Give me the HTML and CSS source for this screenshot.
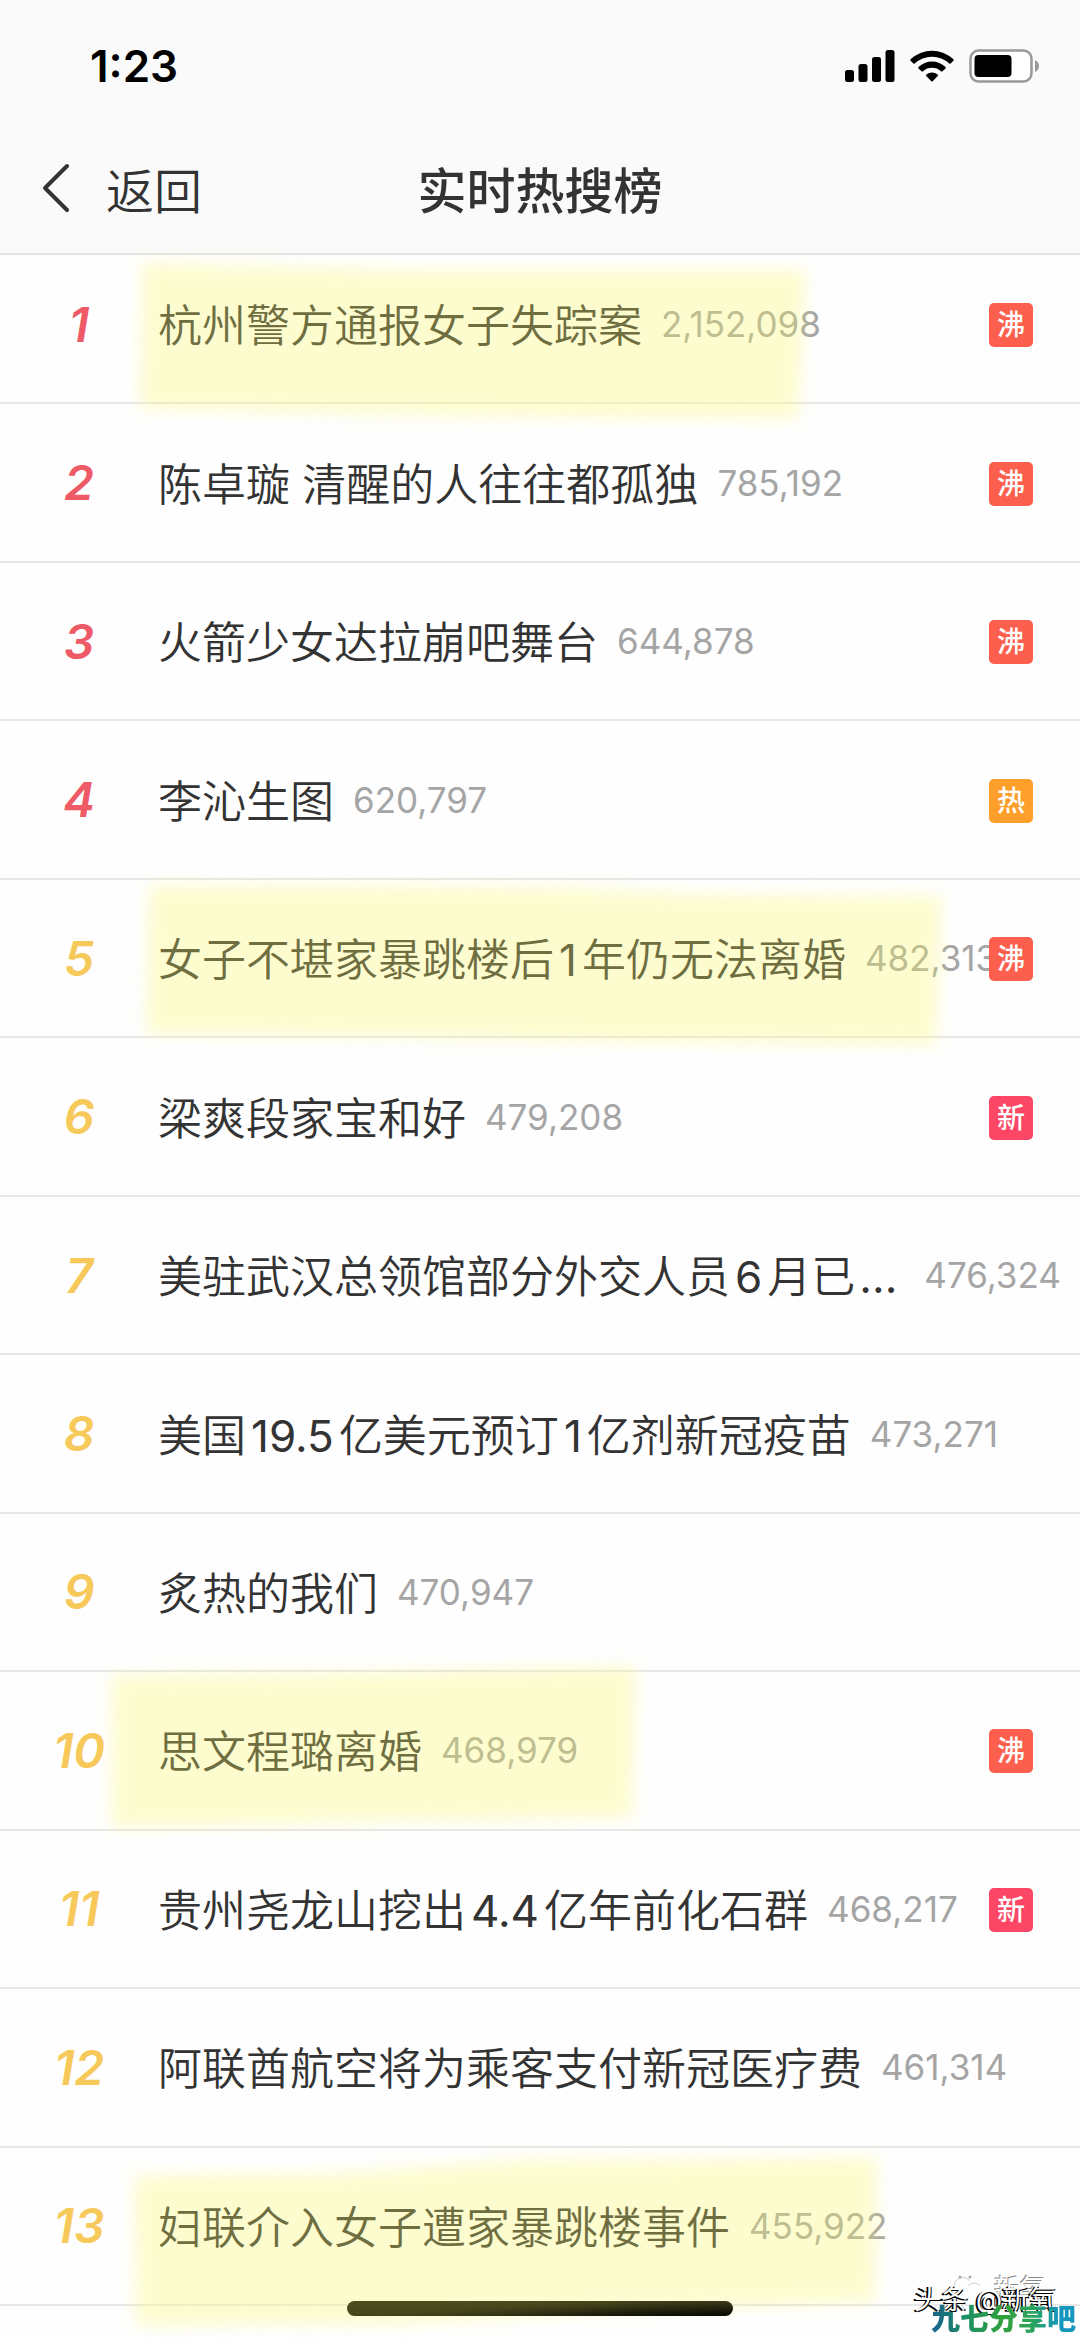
FILE: index.html
```html
<!DOCTYPE html>
<html lang="zh-CN">
<head>
<meta charset="utf-8">
<meta name="viewport" content="width=device-width, initial-scale=1">
<title>实时热搜榜</title>
<link rel="stylesheet" href="styles.css">
</head>
<body>
<div class="screen">
  <header class="top">
    <div class="status">
      <span class="time">1:23</span>
      <div class="indicators">
        <svg width="50" height="32" viewBox="0 0 50 32" aria-hidden="true"><rect x="0" y="20" width="9" height="12" rx="2.500"/><rect x="13.500" y="14" width="9" height="18" rx="2.500"/><rect x="27" y="7" width="9" height="25" rx="2.500"/><rect x="40.500" y="0" width="9" height="32" rx="2.500"/></svg>
        <svg width="44" height="32" viewBox="0 0 44 32" aria-hidden="true"><path d="M0.600 9.300A31 31 0 0 1 43.400 9.300Q44 10 43.400 10.700L40.600 13.400Q40 14 39.300 13.400A25.500 25.500 0 0 0 4.700 13.400Q4 14 3.400 13.400L0.600 10.700Q0 10 0.600 9.300Z"/><path d="M8.500 17A19.500 19.500 0 0 1 35.500 17Q36.200 17.700 35.500 18.400L32.500 21.300Q31.800 22 31 21.300A13.500 13.500 0 0 0 13 21.300Q12.200 22 11.500 21.300L8.500 18.400Q7.800 17.700 8.500 17Z"/><path d="M16.400 24.600A8.500 8.500 0 0 1 27.600 24.600Q28.400 25.300 27.700 26L22.700 31.200Q22 31.900 21.300 31.200L16.300 26Q15.600 25.300 16.400 24.600Z"/></svg>
        <svg width="71" height="34" viewBox="0 0 71 34" aria-hidden="true"><rect x="1.500" y="1.500" width="61" height="31" rx="8" fill="#fff" stroke="#999" stroke-width="2.500"/><rect x="5.500" y="6" width="37" height="22" rx="4"/><path d="M66 11Q70 13 70 17T66 23Z" fill="#999"/></svg>
      </div>
    </div>
    <nav class="nav">
      <button class="back" type="button">
        <svg width="28" height="50" viewBox="0 0 28 50" aria-hidden="true"><path d="M25 3L3 25L25 47" fill="none" stroke="#333" stroke-width="4" stroke-linecap="round" stroke-linejoin="round"/></svg>
        <span>返回</span>
      </button>
      <h1 class="title">实时热搜榜</h1>
    </nav>
  </header>

  <ol class="list">
    <li class="row">
      <span class="rank hot">1</span><a class="topic" href="#">杭州警方通报女子失踪案</a><span class="count">2,152,098</span><span class="tag boil">沸</span>
      <svg class="marker" width="900" height="180" aria-hidden="true"><polygon points="142,16 220,19 420,24 806,24 798,173 500,171 140,163"/></svg>
    </li>
    <li class="row"><span class="rank hot">2</span><a class="topic" href="#">陈卓璇 清醒的人往往都孤独</a><span class="count">785,192</span><span class="tag boil">沸</span></li>
    <li class="row"><span class="rank hot">3</span><a class="topic" href="#">火箭少女达拉崩吧舞台</a><span class="count">644,878</span><span class="tag boil">沸</span></li>
    <li class="row"><span class="rank hot">4</span><a class="topic" href="#">李沁生图</a><span class="count">620,797</span><span class="tag warm">热</span></li>
    <li class="row">
      <span class="rank">5</span><a class="topic" href="#">女子不堪家暴跳楼后<span class="num">1</span>年仍无法离婚</a><span class="count">482,313</span><span class="tag boil">沸</span>
      <svg class="marker" width="1000" height="180" aria-hidden="true"><polygon points="149,5 560,7 700,14 942,16 936,165 640,162 400,157 146,154"/></svg>
    </li>
    <li class="row"><span class="rank">6</span><a class="topic" href="#">梁爽段家宝和好</a><span class="count">479,208</span><span class="tag new">新</span></li>
    <li class="row"><span class="rank">7</span><a class="topic" href="#">美驻武汉总领馆部分外交人员<span class="num">6</span>月已<span class="more">...</span></a><span class="count">476,324</span></li>
    <li class="row"><span class="rank">8</span><a class="topic" href="#">美国<span class="num">19.5</span>亿美元预订<span class="num">1</span>亿剂新冠疫苗</a><span class="count">473,271</span></li>
    <li class="row"><span class="rank">9</span><a class="topic" href="#">炙热的我们</a><span class="count">470,947</span></li>
    <li class="row">
      <span class="rank">10</span><a class="topic" href="#">思文程璐离婚</a><span class="count">468,979</span><span class="tag boil">沸</span>
      <svg class="marker" width="700" height="180" aria-hidden="true"><polygon points="111,3 400,0 636,-6 632,146 400,149 112,156"/></svg>
    </li>
    <li class="row"><span class="rank">11</span><a class="topic" href="#">贵州尧龙山挖出<span class="num">4.4</span>亿年前化石群</a><span class="count">468,217</span><span class="tag new">新</span></li>
    <li class="row"><span class="rank">12</span><a class="topic" href="#">阿联酋航空将为乘客支付新冠医疗费</a><span class="count">461,314</span></li>
    <li class="row">
      <span class="rank">13</span><a class="topic" href="#">妇联介入女子遭家暴跳楼事件</a><span class="count">455,922</span>
      <svg class="marker" width="900" height="190" aria-hidden="true"><polygon points="134,27 340,25 520,12 877,10 875,154 640,162 400,176 136,178"/></svg>
    </li>
  </ol>

  <div class="home"></div>

  <div class="marks">
    <span class="mark-wechat">
      <svg width="30" height="24" viewBox="0 0 30 24" aria-hidden="true"><path d="M2 14A9 9 0 0 1 18 8M16 13A7 6 0 0 1 28 13" fill="none" stroke="#ccc"/><circle cx="8" cy="4" r="1.500"/><circle cx="18" cy="4" r="1.500"/></svg>
      新氧
    </span>
    <span class="mark-author">头条 @新氧</span>
    <span class="mark-site">九七分享吧</span>
  </div>
</div>
</body>
</html>
```
FILE: styles.css
```css
* {
  box-sizing: border-box;
}

body {
  margin: 0;
  background: #fefefe;
  color: #333;
  font-family: Inter, "Noto Sans CJK SC", sans-serif;
}

.screen {
  position: relative;
  display: flex;
  flex-direction: column;
  min-height: 100vh;
  overflow: hidden;
}

/* header */
.top {
  background: #fafafa;
  border-bottom: 2px solid #e4e4e4;
}

.status {
  display: flex;
  align-items: center;
  justify-content: space-between;
  height: 132px;
  padding: 0 40px 0 90px;
}

.time {
  color: #000;
  font-size: 44px;
  font-weight: 600;
}

.indicators {
  display: flex;
  align-items: center;
  gap: 15px;
}

.nav {
  display: grid;
  grid-template-columns: 1fr auto 1fr;
  align-items: center;
  height: 121px;
  padding: 0 42px 10px;
}

.back {
  display: flex;
  align-items: center;
  gap: 36px;
  padding: 0;
  border: 0;
  background: none;
  color: inherit;
  font: inherit;
  font-size: 48px;
  font-weight: 350;
}

.title {
  margin: 0;
  font-size: 49px;
  font-weight: 500;
}

/* ranking; the first row is scrolled slightly under the header */
.list {
  display: flex;
  flex: 1;
  flex-direction: column;
  margin: -9px 0 33px;
  padding: 0;
  list-style: none;
}

.row {
  position: relative;
  display: flex;
  flex: 1;
  align-items: center;
  min-height: 120px;
  padding-right: 20px;
  border-bottom: 2px solid #e8e8e8;
  white-space: nowrap;
}

.rank {
  flex: none;
  width: 158px;
  color: #f7c95a;
  font-size: 48px;
  font-style: italic;
  font-weight: 600;
  text-align: center;
}

.rank.hot {
  color: #ee5a66;
}

.topic {
  margin-right: 19px;
  padding-bottom: 2px;
  color: inherit;
  font-size: 44px;
  font-weight: 350;
  text-decoration: none;
}

.num {
  margin: 0 5px;
  font-weight: 400;
}

.more {
  margin: 0 8px 0 4px;
  font-weight: 400;
}

.count {
  color: #a5a5a5;
  font-size: 35px;
  font-weight: 400;
}

.tag {
  position: absolute;
  right: 47px;
  width: 44px;
  margin-top: 2px;
  border-radius: 5px;
  color: #fff;
  font-size: 28px;
  font-weight: 500;
  line-height: 44px;
  text-align: center;
}

.tag.boil {
  background: #fd5f4e;
}

.tag.warm {
  background: #fd9f2a;
}

.tag.new {
  background: #fb4765;
}

.marker {
  position: absolute;
  z-index: 2;
  top: 0;
  left: 0;
  overflow: visible;
  fill: rgba(251, 248, 98, 0.3);
  filter: blur(8px);
  pointer-events: none;
}

.home {
  position: absolute;
  z-index: 1;
  bottom: 23px;
  left: 50%;
  width: 386px;
  height: 15px;
  margin-left: -193px;
  border-radius: 8px;
  background: #000;
}

/* watermarks */
.marks {
  position: absolute;
  z-index: 3;
  right: 0;
  bottom: 0;
  width: 180px;
  height: 66px;
  white-space: nowrap;
}

.mark-wechat {
  position: absolute;
  top: 0;
  right: 34px;
  display: flex;
  gap: 12px;
  color: #fff;
  font-size: 26px;
  line-height: 32px;
  text-shadow: -1px -1px 0 #888;
  fill: #aaa;
}

.mark-author {
  position: absolute;
  right: 24px;
  bottom: 21px;
  color: #fff;
  font-size: 27px;
  line-height: 36px;
  text-shadow: -2px 1px 0 #000, 1px 1px 0 #000;
}

.mark-site {
  position: absolute;
  right: 4px;
  bottom: 2px;
  background: linear-gradient(90deg, #17628c, #1c9064 25%, #33a13c 50%, #2aa35c 70%, #1496bd 88%);
  background-clip: text;
  color: transparent;
  font-size: 29px;
  font-weight: 900;
  line-height: 34px;
}
```
